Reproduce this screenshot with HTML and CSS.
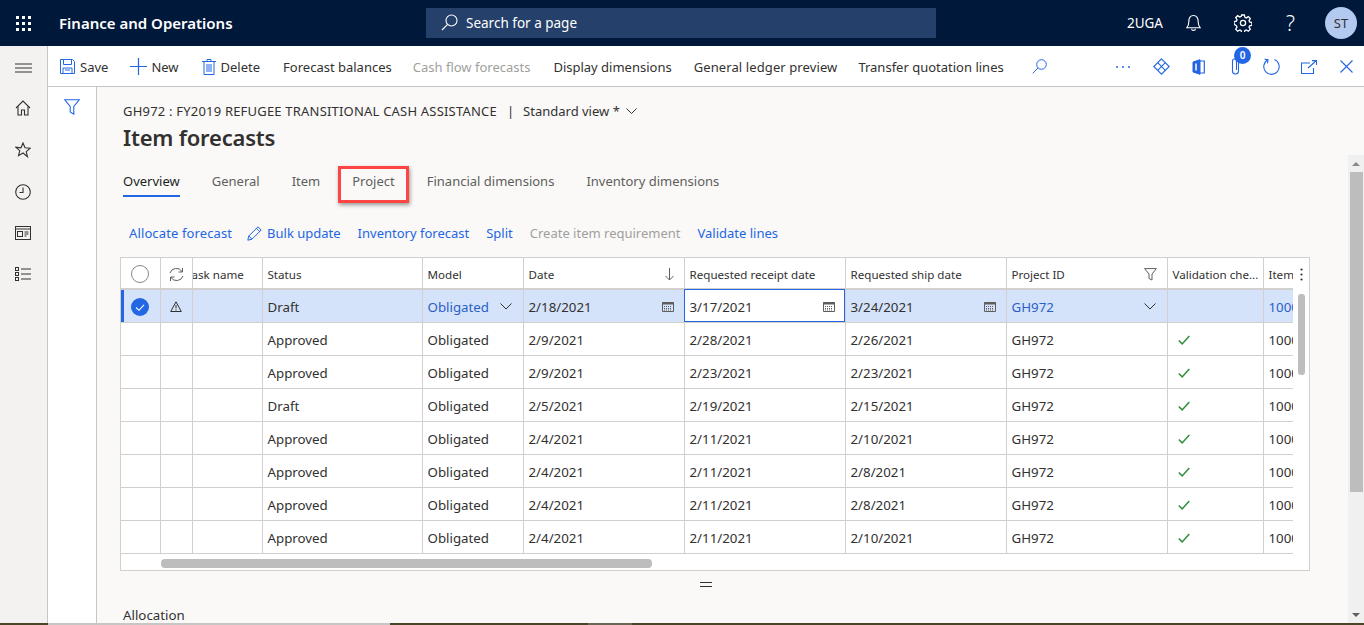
FILE: index.html

```html
<!DOCTYPE html>
<html lang="en">
<head>
    <meta charset="UTF-8">
    <title>Item forecasts</title>
    <link rel="stylesheet" href="styles.css">
</head>
<body>

<!-- Top bar -->
    <header class="topbar">
        <button class="waffle" aria-label="Apps">
            <svg width="16" height="16" viewBox="0 0 16 16" fill="#fff"><rect x="0" y="1" width="3" height="3"/><rect x="6" y="1" width="3" height="3"/><rect x="12" y="1" width="3" height="3"/><rect x="0" y="7" width="3" height="3"/><rect x="6" y="7" width="3" height="3"/><rect x="12" y="7" width="3" height="3"/><rect x="0" y="13" width="3" height="3"/><rect x="6" y="13" width="3" height="3"/><rect x="12" y="13" width="3" height="3"/></svg>
        </button>
        <div class="app-name">Finance and Operations</div>
        <div class="search-box">
            <svg width="17" height="17" viewBox="0 0 17 17" fill="none" stroke="#fff" stroke-width="1.1"><circle cx="10.5" cy="6.5" r="5.5"/><path d="M6.6 10.4 1 16"/></svg>
            <span>Search for a page</span>
        </div>
        <div class="top-right">
            <span class="company">2UGA</span>
            <svg class="top-bell" width="15" height="18" viewBox="0 0 16 18" fill="none" stroke="#fff" stroke-width="1.2"><path d="M1 14h14c-1.500-1.500-2-3-2-6.500C13 3.500 11 1 8 1S3 3.500 3 7.500C3 11 2.500 12.500 1 14Z"/><path d="M6 15c0 2.500 4 2.500 4 0"/></svg>
            <svg class="top-gear" width="18" height="18" viewBox="0 0 18 18" fill="none" stroke="#fff" stroke-width="1.300"><circle cx="9" cy="9" r="2.600"/><path d="M7.600 1h2.800l.5 2.300 1.400.6 2-1.300 2 2-1.300 2 .6 1.400 2.300.5v2.800l-2.300.5-.6 1.400 1.300 2-2 2-2-1.300-1.400.6-.5 2.300H7.600l-.5-2.300-1.400-.6-2 1.300-2-2 1.300-2-.6-1.400L.1 10.400V7.600l2.300-.5.6-1.400-1.300-2 2-2 2 1.300 1.400-.6Z"/></svg>
            <span class="top-help">?</span>
            <span class="avatar">ST</span>
        </div>
    </header>

<!-- Action pane -->
    <div class="shell">
        <nav class="rail">
            <div class="rail-burger"><svg width="17" height="10" viewBox="0 0 17 10" stroke="#323130" stroke-width="1.200"><path d="M0 1h17M0 5h17M0 9h17"/></svg></div>
            <svg class="rail-icon" width="16" height="16" viewBox="0 0 16 16" fill="none" stroke="#323130" stroke-width="1.100"><path d="M1 8 8 1l7 7"/><path d="M3 6.500V15h3.500v-5h3v5H13V6.500"/></svg>
            <svg class="rail-icon" width="16" height="16" viewBox="0 0 16 16" fill="none" stroke="#323130" stroke-width="1.100"><path d="m8 1 2 4.800 5.200.4-4 3.400 1.300 5.100L8 11l-4.500 2.700 1.300-5.100-4-3.400L6 5.800Z"/></svg>
            <svg class="rail-icon" width="16" height="16" viewBox="0 0 16 16" fill="none" stroke="#323130" stroke-width="1.100"><circle cx="8" cy="8" r="7.300"/><path d="M8 3.500V8.500H4.500"/></svg>
            <svg class="rail-icon" width="16" height="14" viewBox="0 0 16 14" fill="none" stroke="#323130" stroke-width="1"><rect x=".5" y=".5" width="15" height="13"/><path d="M.5 3h15"/><rect x="2.500" y="5.500" width="5" height="5"/><path d="M9.500 6h4M9.500 8h4M9.500 10h2"/></svg>
            <svg class="rail-icon" width="16" height="16" viewBox="0 0 16 16" fill="none" stroke="#323130" stroke-width="1"><rect x=".5" y="1.500" width="3" height="3"/><rect x=".5" y="6.500" width="3" height="3"/><rect x=".5" y="11.500" width="3" height="3"/><path d="M6 3h10M6 8h10M6 13h10"/></svg>
        </nav>

        <div class="workspace">
            <div class="actionbar">
                <button class="act act-save"><svg width="15" height="15" viewBox="0 0 15 15" fill="none" stroke="#2266e3" stroke-width="1"><path d="M.5.500h12l2 2v12H.5Z"/><path d="M3.500.500v5h8v-5M3 14.500V9h9v5.500"/><path d="M5 11h5"/></svg>Save</button>
                <button class="act act-new"><svg width="17" height="17" viewBox="0 0 17 17" stroke="#2266e3" stroke-width="1.200"><path d="M8.500 0v17M0 8.500h17"/></svg>New</button>
                <button class="act act-delete"><svg width="14" height="16" viewBox="0 0 14 16" fill="none" stroke="#2266e3" stroke-width="1"><path d="M2 3v12.500h10V3M0 2.500h14M5 2.500V.5h4v2M5 5v8M7 5v8M9 5v8"/></svg>Delete</button>
                <button class="act act-forecast">Forecast balances</button>
                <button class="act act-off">Cash flow forecasts</button>
                <button class="act">Display dimensions</button>
                <button class="act act-ledger">General ledger preview</button>
                <button class="act">Transfer quotation lines</button>
                <svg class="act-search" width="15" height="15" viewBox="0 0 15 15" fill="none" stroke="#2266e3" stroke-width="1"><circle cx="9.500" cy="5.500" r="4.800"/><path d="M6 9 .8 14.300"/></svg>
                <div class="act-right">
                    <svg width="16" height="4" viewBox="0 0 16 4" fill="#2266e3"><circle cx="2" cy="2" r="1"/><circle cx="8" cy="2" r="1"/><circle cx="14" cy="2" r="1"/></svg>
                    <svg class="ico-diamond" width="17" height="17" viewBox="0 0 17 17" fill="none" stroke="#2266e3" stroke-width="1.100"><path d="M8.500.8 16.200 8.500 8.500 16.200.8 8.500Z"/><path d="M4.700 4.700 12.300 12.300M12.300 4.700 4.700 12.300"/></svg>
                    <svg class="ico-office" width="13" height="16" viewBox="0 0 13 16" fill="none" stroke="#2266e3"><path d="M1 3 8 .7v14.600L1 13Z" fill="#2266e3"/><path d="M8 2h4.300v12H8" stroke-width="1.200"/><path d="M4 4.500v7" stroke="#fff" stroke-width="1.500"/></svg>
                    <span class="clip">
                        <svg width="9" height="17" viewBox="0 0 9 17" fill="none" stroke="#2266e3" stroke-width="1.100"><path d="M7.500 4v9a3 3 0 0 1-6 0V3a2 2 0 0 1 4 0v9"/></svg>
                        <span class="clip-badge">0</span>
                    </span>
                    <svg class="ico-refresh" width="17" height="17" viewBox="0 0 17 17" fill="none" stroke="#2266e3" stroke-width="1.100"><path d="M5 1.800a7.700 7.700 0 1 0 6.500-.2"/><path d="M1.500 1.300 5 1.800 4.500 5.300"/></svg>
                    <svg class="ico-open" width="16" height="14" viewBox="0 0 16 14" fill="none" stroke="#2266e3" stroke-width="1.100"><path d="M9 3H.5v10.500h12V8"/><path d="M7 8 15 1M11 .6h4.500V5"/></svg>
                    <svg class="ico-close" width="13" height="13" viewBox="0 0 13 13" stroke="#2266e3" stroke-width="1.100"><path d="m.5.500 12 12M12.500.500l-12 12"/></svg>
                </div>
            </div>

            <div class="page">
                <aside class="filter-pane">
                    <svg width="16" height="16" viewBox="0 0 16 16" fill="none" stroke="#2266e3" stroke-width="1.100"><path d="M.8.800h14.400L9.800 7.500v7.700L6.200 13V7.500Z"/></svg>
                </aside>

                <main class="content">
                    <div class="crumb">
                        <span class="crumb-name">GH972 : FY2019 REFUGEE TRANSITIONAL CASH ASSISTANCE</span>
                        <span class="crumb-sep">|</span>
                        <span>Standard view *</span>
                        <svg width="11" height="6" viewBox="0 0 11 6" fill="none" stroke="#323130"><path d="m.5.500 5 5 5-5"/></svg>
                    </div>
                    <h1 class="title">Item forecasts</h1>

                    <div class="tabs">
                        <span class="tab tab-on">Overview</span>
                        <span class="tab">General</span>
                        <span class="tab">Item</span>
                        <span class="tab tab-marked">Project</span>
                        <span class="tab">Financial dimensions</span>
                        <span class="tab">Inventory dimensions</span>
                    </div>

                    <div class="strip">
                        <span class="strip-item strip-first">Allocate forecast</span>
                        <span class="strip-item"><svg width="15" height="15" viewBox="0 0 15 15" fill="none" stroke="#2266e3"><path d="M.8 14.200 1.800 10 11 .8 14.200 4 5 13.200Z"/><path d="M9.500 2.300 12.700 5.500M1.800 10 5 13.200"/></svg>Bulk update</span>
                        <span class="strip-item">Inventory forecast</span>
                        <span class="strip-item">Split</span>
                        <span class="strip-item strip-off">Create item requirement</span>
                        <span class="strip-item">Validate lines</span>
                    </div>

                    <div class="grid-box">
                        <table class="grid">
                            <colgroup>
                                <col class="c-sel"><col class="c-sync"><col class="c-task"><col class="c-status"><col class="c-model"><col class="c-date"><col class="c-date"><col class="c-date"><col class="c-date"><col class="c-valid"><col class="c-item">
                            </colgroup>
                            <thead>
                                <tr>
                                    <th><span class="radio"></span></th>
                                    <th class="pin"><svg width="15" height="15" viewBox="0 0 15 15" fill="none" stroke="#605e5c"><path d="M1 6A6.700 6.700 0 0 1 13 4.500M14 9A6.700 6.700 0 0 1 2 10.500"/><path d="M13.500 1v4h-4M1.500 14v-4h4"/></svg></th>
                                    <th class="task-head">ask name</th>
                                    <th>Status</th>
                                    <th>Model</th>
                                    <th><div class="cell-row">Date<svg class="head-ico" width="9" height="13" viewBox="0 0 9 13" fill="none" stroke="#605e5c"><path d="M4.500 0v12M.5 8l4 4 4-4"/></svg></div></th>
                                    <th>Requested receipt date</th>
                                    <th>Requested ship date</th>
                                    <th><div class="cell-row">Project ID<svg class="head-ico" width="13" height="13" viewBox="0 0 13 13" fill="none" stroke="#605e5c"><path d="M.6.600h11.800L8 6v6L5 10.500V6Z"/></svg></div></th>
                                    <th class="cut">Validation che...</th>
                                    <th class="cut">Item</th>
                                </tr>
                            </thead>
                            <tbody>
                                <tr class="row-on">
                                    <td class="sel"><svg width="18" height="18" viewBox="0 0 18 18"><circle cx="9" cy="9" r="9" fill="#2266e3"/><path d="m5 9.500 3 2.800 5-5.500" fill="none" stroke="#fff" stroke-width="1.100"/></svg></td>
                                    <td class="pin"><svg width="12" height="11" viewBox="0 0 12 11" fill="none" stroke="#323130"><path d="M6 .8 11.300 10.500H.7Z"/><path d="M6 4v3.500M6 8.500v1"/></svg></td>
                                    <td></td>
                                    <td>Draft</td>
                                    <td class="val"><div class="cell-row">Obligated<svg class="chev" width="12" height="7" viewBox="0 0 12 7" fill="none" stroke="#323130"><path d="m.5.500 5.500 5.500 5.500-5.500"/></svg></div></td>
                                    <td><div class="cell-row">2/18/2021<svg class="cal" width="12" height="11" viewBox="0 0 12 11"><use href="#cal"/></svg></div></td>
                                    <td class="focus"><div class="cell-row">3/17/2021<svg class="cal" width="12" height="11" viewBox="0 0 12 11"><use href="#cal"/></svg></div></td>
                                    <td><div class="cell-row">3/24/2021<svg class="cal" width="12" height="11" viewBox="0 0 12 11"><use href="#cal"/></svg></div></td>
                                    <td class="val"><div class="cell-row">GH972<svg class="chev" width="12" height="7" viewBox="0 0 12 7" fill="none" stroke="#323130"><path d="m.5.500 5.500 5.500 5.500-5.500"/></svg></div></td>
                                    <td></td>
                                    <td class="val cut">1000</td>
                                </tr>
                                <tr><td></td><td class="pin"></td><td></td><td>Approved</td><td>Obligated</td><td>2/9/2021</td><td>2/28/2021</td><td>2/26/2021</td><td>GH972</td><td class="ok"><svg width="12" height="10" viewBox="0 0 12 10"><use href="#tick"/></svg></td><td class="cut">1000</td></tr>
                                <tr><td></td><td class="pin"></td><td></td><td>Approved</td><td>Obligated</td><td>2/9/2021</td><td>2/23/2021</td><td>2/23/2021</td><td>GH972</td><td class="ok"><svg width="12" height="10" viewBox="0 0 12 10"><use href="#tick"/></svg></td><td class="cut">1000</td></tr>
                                <tr><td></td><td class="pin"></td><td></td><td>Draft</td><td>Obligated</td><td>2/5/2021</td><td>2/19/2021</td><td>2/15/2021</td><td>GH972</td><td class="ok"><svg width="12" height="10" viewBox="0 0 12 10"><use href="#tick"/></svg></td><td class="cut">1000</td></tr>
                                <tr><td></td><td class="pin"></td><td></td><td>Approved</td><td>Obligated</td><td>2/4/2021</td><td>2/11/2021</td><td>2/10/2021</td><td>GH972</td><td class="ok"><svg width="12" height="10" viewBox="0 0 12 10"><use href="#tick"/></svg></td><td class="cut">1000</td></tr>
                                <tr><td></td><td class="pin"></td><td></td><td>Approved</td><td>Obligated</td><td>2/4/2021</td><td>2/11/2021</td><td>2/8/2021</td><td>GH972</td><td class="ok"><svg width="12" height="10" viewBox="0 0 12 10"><use href="#tick"/></svg></td><td class="cut">1000</td></tr>
                                <tr><td></td><td class="pin"></td><td></td><td>Approved</td><td>Obligated</td><td>2/4/2021</td><td>2/11/2021</td><td>2/8/2021</td><td>GH972</td><td class="ok"><svg width="12" height="10" viewBox="0 0 12 10"><use href="#tick"/></svg></td><td class="cut">1000</td></tr>
                                <tr><td></td><td class="pin"></td><td></td><td>Approved</td><td>Obligated</td><td>2/4/2021</td><td>2/11/2021</td><td>2/10/2021</td><td>GH972</td><td class="ok"><svg width="12" height="10" viewBox="0 0 12 10"><use href="#tick"/></svg></td><td class="cut">1000</td></tr>
                            </tbody>
                        </table>
                        <svg class="grid-kebab" width="3" height="13" viewBox="0 0 3 13" fill="#323130"><circle cx="1.500" cy="1.500" r="1.100"/><circle cx="1.500" cy="6.500" r="1.100"/><circle cx="1.500" cy="11.500" r="1.100"/></svg>
                        <div class="grid-vbar"></div>
                        <div class="grid-hbar"><div class="grid-hthumb"></div></div>
                    </div>

                    <div class="grip"></div>
                    <div class="section-name">Allocation</div>
                </main>

                <div class="page-scroll">
                    <span class="arrow-up"></span>
                    <div class="page-thumb"></div>
                    <span class="arrow-down"></span>
                </div>
            </div>
        </div>
    </div>

<!-- Strip of the window behind -->
    <div class="behind">
        <div class="behind-a"></div>
        <div class="behind-b"></div>
        <div class="behind-c"></div>
        <div class="behind-d"></div>
        <div class="behind-c behind-grow"></div>
    </div>

    <svg class="defs" width="0" height="0">
        <symbol id="cal" viewBox="0 0 12 11"><path d="M.5 1.500h11v9H.5Z" fill="none" stroke="#605e5c"/><path d="M.5 1h11v2.500H.5Z" fill="#605e5c"/><path d="M2 5.500h8M2 7.500h8M2 9h8" fill="none" stroke="#605e5c" stroke-dasharray="1 1"/></symbol>
        <symbol id="tick" viewBox="0 0 12 10"><path d="m.8 5.500 3.400 3.400L11.300 1" fill="none" stroke="#2f8f3a" stroke-width="1.500"/></symbol>
    </svg>

</body>
</html>
```

FILE: styles.css

```css
/* General */
    * {
        box-sizing: border-box;
    }

    html, body {
        height: 100%;
    }

    body {
        margin: 0;
        display: flex;
        flex-direction: column;
        overflow: hidden;
        font-family: "Noto Sans", "Open Sans", sans-serif;
        font-size: 13px;
        color: #323130;
        background: #faf9f8;
    }

    button {
        font: inherit;
        color: inherit;
        background: none;
        border: none;
        padding: 0;
    }

    svg {
        display: block;
        flex: none;
    }

    .defs {
        position: absolute;
    }

/* Top bar */
    .topbar {
        flex: none;
        height: 46px;
        display: flex;
        align-items: center;
        background: #00183a;
        color: #fff;
    }

    .waffle {
        width: 59px;
        padding-left: 16px;
    }

    .app-name {
        width: 367px;
        font-size: 15px;
        font-weight: 600;
    }

    .search-box {
        width: 510px;
        height: 30px;
        display: flex;
        align-items: center;
        gap: 8px;
        padding: 0 0 1px 15px;
        background: #25406a;
        font-size: 13.5px;
    }

    .top-right {
        margin-left: auto;
        display: flex;
        align-items: center;
        padding-right: 7px;
    }

    .company {
        font-size: 13.5px;
        margin-right: 23px;
    }

    .top-bell {
        margin-right: 33px;
    }

    .top-gear {
        margin-right: 34px;
    }

    .top-help {
        font-size: 21px;
        font-weight: 300;
        line-height: 24px;
        width: 10px;
        margin-right: 29px;
    }

    .avatar {
        width: 32px;
        height: 32px;
        border-radius: 50%;
        display: flex;
        align-items: center;
        justify-content: center;
        background: #b4c9f0;
        color: #323130;
        font-size: 13px;
    }

/* Left rail */
    .shell {
        flex: 1;
        min-height: 0;
        display: flex;
    }

    .rail {
        flex: none;
        width: 48px;
        display: flex;
        flex-direction: column;
        align-items: center;
        padding-right: 1px;
        background: #f3f2f1;
        border-right: 1px solid #c8c6c4;
    }

    .rail-burger {
        height: 41px;
        padding-top: 2px;
        display: flex;
        align-items: center;
    }

    .rail-icon {
        margin-top: 26px;
    }

    .rail-burger + .rail-icon {
        margin-top: 13px;
    }

/* Action pane */
    .workspace {
        flex: 1;
        min-width: 0;
        display: flex;
        flex-direction: column;
    }

    .actionbar {
        flex: none;
        height: 41px;
        display: flex;
        align-items: center;
        padding: 1px 0 0 12px;
        background: #fff;
        border-bottom: 1px solid #c8c6c4;
    }

    .act {
        display: flex;
        align-items: center;
        margin-right: 22px;
        white-space: nowrap;
    }

    .act svg {
        margin-right: 5px;
    }

    .act-new {
        margin-right: 23px;
    }

    .act-new svg {
        margin-right: 4px;
    }

    .act-delete {
        margin-right: 23px;
    }

    .act-forecast {
        margin-right: 21px;
    }

    .act-off {
        margin-right: 23px;
        color: #a19f9d;
    }

    .act-ledger {
        margin-right: 21px;
        letter-spacing: 0.1px;
    }

    .act-search {
        margin-left: 6px;
    }

    .act-right {
        margin-left: auto;
        display: flex;
        align-items: center;
        gap: 22px;
        padding-right: 11px;
    }

    .clip {
        position: relative;
        margin: 0 1px 0 4px;
    }

    .ico-open {
        margin-left: -1px;
    }

    .ico-close {
        margin-left: 1px;
    }

    .clip-badge {
        position: absolute;
        top: -11px;
        left: 3px;
        width: 17px;
        height: 17px;
        border-radius: 50%;
        background: #2266e3;
        color: #fff;
        font-size: 10px;
        font-weight: 600;
        line-height: 17px;
        text-align: center;
    }

/* Page */
    .page {
        flex: 1;
        min-height: 0;
        display: flex;
    }

    .filter-pane {
        flex: none;
        width: 49px;
        padding: 12px 0 0 16px;
        background: #fff;
        border-right: 1px solid #c8c6c4;
    }

    .content {
        flex: 1;
        min-width: 0;
        padding: 14px 0 0 26px;
        overflow: hidden;
    }

    .crumb {
        display: flex;
        align-items: center;
        height: 20px;
    }

    .crumb-name {
        letter-spacing: 0.2px;
    }

    .crumb-sep {
        margin: 0 9px 0 10px;
    }

    .crumb svg {
        margin-left: 6px;
    }

    .title {
        margin: 0;
        font-size: 22px;
        font-weight: 600;
        letter-spacing: -0.2px;
        line-height: 32px;
    }

    /* Tabs */
    .tabs {
        display: flex;
        gap: 32px;
        margin-top: 19px;
        color: #605e5c;
    }

    .tab {
        position: relative;
        height: 25px;
        line-height: 18px;
    }

    .tab-on {
        color: #201f1e;
        border-bottom: 2px solid #2266e3;
    }

    .tab-marked::after {
        content: "";
        position: absolute;
        top: -6px;
        left: -14px;
        right: -14px;
        bottom: -6px;
        border: 3px solid #f44;
        box-shadow: 1px 2px 4px rgba(0, 0, 0, 0.4);
    }

    .strip {
        display: flex;
        align-items: center;
        gap: 17px;
        margin-top: 20px;
        padding-left: 6px;
        color: #2266e3;
        height: 32px;
    }

    .strip-item {
        display: flex;
        align-items: center;
        gap: 5px;
        white-space: nowrap;
    }

    .strip-first {
        margin-right: -2px;
        letter-spacing: 0.12px;
    }

    .strip-off {
        color: #a19f9d;
    }

/* Grid */
    .grid-box {
        position: relative;
        width: 1190px;
        height: 314px;
        margin: 8px 0 0 -3px;
        background: #fff;
        border: 1px solid #d2d0ce;
    }

    .grid {
        width: 1172px;
        table-layout: fixed;
        border-collapse: collapse;
        font-size: 13.3px;
    }

    .c-sel { width: 39px; }
    .c-sync { width: 32px; }
    .c-task { width: 70px; }
    .c-status { width: 160px; }
    .c-model { width: 101px; }
    .c-date { width: 161px; }
    .c-valid { width: 96px; }
    .c-item { width: 30px; }

    .grid th, .grid td {
        height: 33px;
        padding: 2px 5px 0;
        border: 1px solid #d2d0ce;
        border-top: none;
        text-align: left;
        font-weight: 400;
        white-space: nowrap;
        overflow: hidden;
    }

    .grid th {
        height: 31px;
        padding-top: 2px;
        font-size: 11.6px;
        border-bottom-width: 2px;
    }

    .grid tr > :first-child {
        border-left: none;
    }

    .grid tr > :last-child {
        border-right: none;
    }

    .grid tr > :first-child, .grid .pin {
        text-align: center;
    }

    .grid .pin svg, .sel svg {
        margin: 0 auto;
    }

    .radio {
        display: block;
        width: 18px;
        height: 18px;
        margin: 0 auto;
        border: 1px solid #8a8886;
        border-radius: 50%;
    }

    .grid .pin {
        box-shadow: 2px 0 2px rgba(0, 0, 0, 0.12);
    }

    .grid .task-head {
        padding-left: 0;
        text-indent: -1px;
    }

    .cell-row {
        display: flex;
        align-items: center;
        justify-content: space-between;
    }

    .head-ico {
        margin-right: 5px;
    }

    .cal {
        margin-right: 5px;
    }

    .chev {
        margin-right: 6px;
    }

    .row-on td {
        background: #d5e3fa;
    }

    .grid .sel {
        box-shadow: inset 3px 0 0 #2266e3;
        padding-left: 4px;
    }

    .val {
        color: #2b5fc7;
    }

    .grid .focus {
        background: #fff;
        outline: 1px solid #2266e3;
        outline-offset: -1px;
    }

    .ok svg {
        margin-left: 5px;
    }

    .grid-kebab {
        position: absolute;
        top: 10px;
        right: 6px;
    }

    .grid-vbar {
        position: absolute;
        top: 36px;
        right: 4px;
        width: 7px;
        height: 81px;
        border-radius: 3px;
        background: #bdbdbd;
    }

    .grid-hbar {
        position: absolute;
        left: 40px;
        bottom: 2px;
        width: 491px;
        height: 9px;
    }

    .grid-hthumb {
        height: 100%;
        border-radius: 4px;
        background: #bdbdbd;
    }

    .grip {
        width: 12px;
        height: 5px;
        margin: 11px 0 0 577px;
        border-top: 1px solid #323130;
        border-bottom: 1px solid #323130;
    }

    .section-name {
        margin-top: 19px;
        font-size: 13.3px;
        line-height: 18px;
    }

/* Page scrollbar */
    .page-scroll {
        position: absolute;
        top: 155px;
        right: 0;
        bottom: 2px;
        width: 16px;
        padding: 17px 1px 0 2px;
        background: #f0f0f0;
    }

    .page-thumb {
        height: 320px;
        background: #bdbdbd;
    }

    .arrow-up, .arrow-down {
        position: absolute;
        left: 4px;
        width: 0;
        height: 0;
        border-left: 4px solid transparent;
        border-right: 4px solid transparent;
    }

    .arrow-up {
        top: 7px;
        border-bottom: 4px solid #8a8886;
    }

    .arrow-down {
        bottom: 6px;
        border-top: 4px solid #605e5c;
    }

/* Window behind */
    .behind {
        flex: none;
        height: 2px;
        display: flex;
    }

    .behind-a {
        width: 48px;
        background: #4a4428;
    }

    .behind-b {
        width: 342px;
        background: #c8c6c4;
    }

    .behind-c {
        width: 198px;
        background: #4a4428;
    }

    .behind-d {
        width: 44px;
        background: #6b6654;
    }

    .behind-grow {
        flex: 1;
    }
```
